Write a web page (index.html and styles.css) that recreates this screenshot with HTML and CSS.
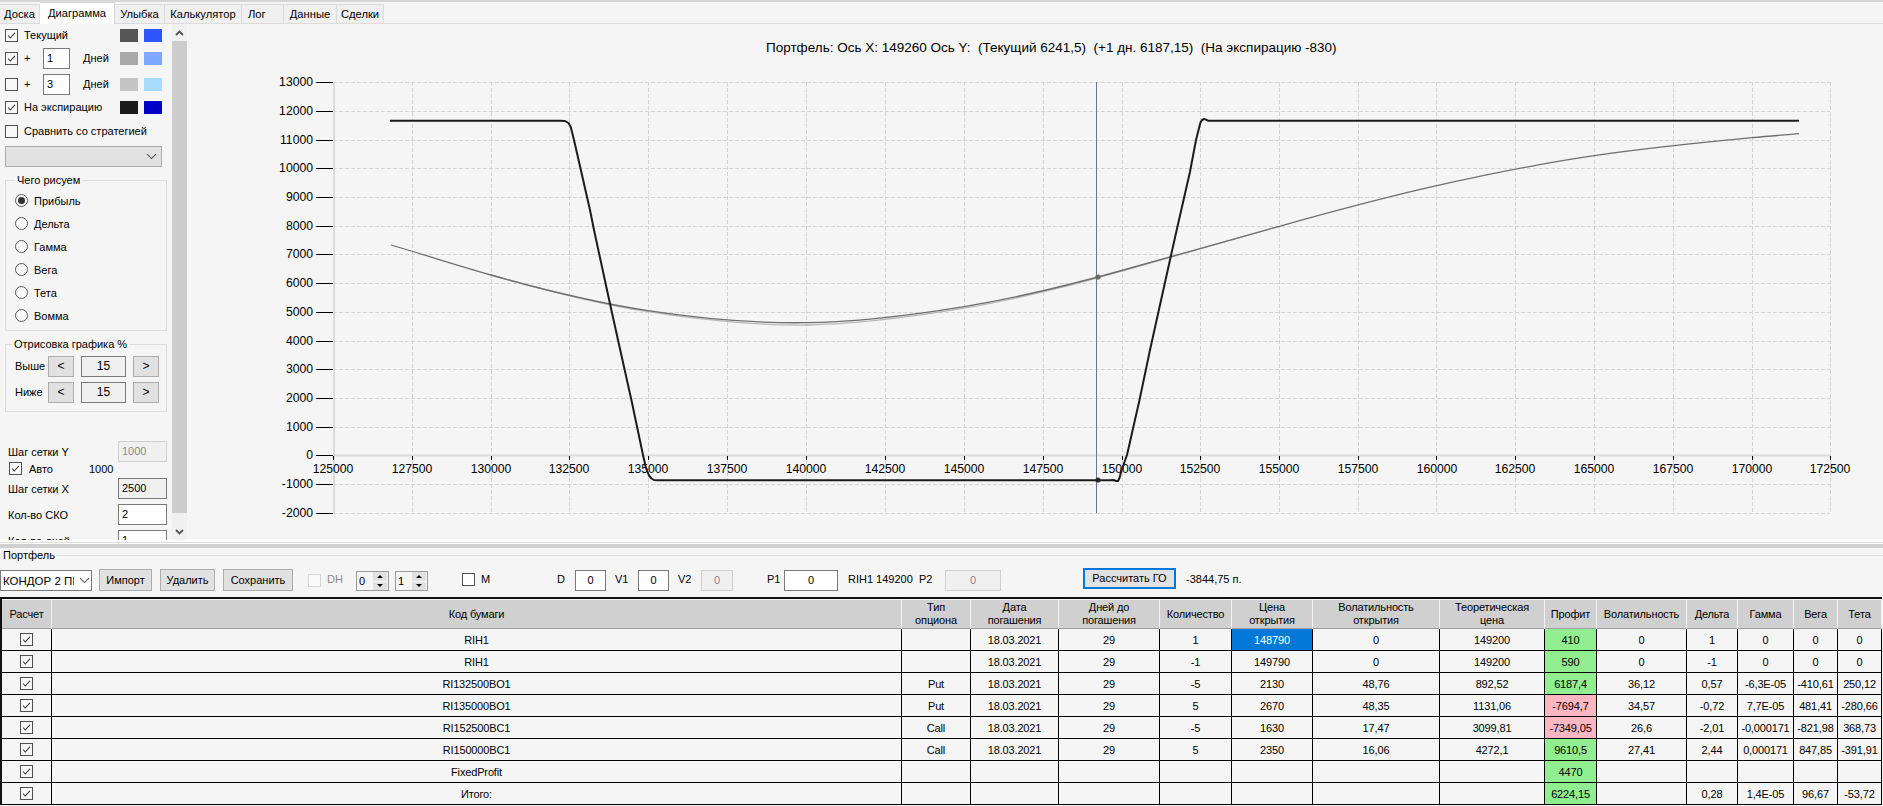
FILE: index.html
```html
<!DOCTYPE html>
<html lang="ru">
<head>
<meta charset="utf-8">
<title>Диаграмма</title>
<link rel="stylesheet" href="styles.css">
</head>
<body>
<svg class="defs" width="0" height="0">
  <symbol id="tick" viewBox="0 0 13 13"><path d="M2.5 6.5 5 9.5 10.5 3.5" fill="none" stroke="#333" stroke-width="1.2"/></symbol>
  <symbol id="down" viewBox="0 0 11 7"><path d="M1 1.2 5.5 5.6 10 1.2" fill="none" stroke="#555" stroke-width="1.1"/></symbol>
  <symbol id="sdown" viewBox="0 0 9 6"><path d="M1 1 4.5 4.5 8 1" fill="none" stroke="#555" stroke-width="1.8"/></symbol>
  <symbol id="sup" viewBox="0 0 9 6"><path d="M1 5 4.5 1.5 8 5" fill="none" stroke="#555" stroke-width="1.8"/></symbol>
</svg>

<nav class="tabs">
  <span class="tab t1">Доска</span>
  <span class="tab t2 active">Диаграмма</span>
  <span class="tab t3">Улыбка</span>
  <span class="tab t4">Калькулятор</span>
  <span class="tab t5">Лог</span>
  <span class="tab t6">Данные</span>
  <span class="tab t7">Сделки</span>
</nav>

<main class="main">
  <aside class="side">
    <div class="row r1"><span class="cb"><svg><use href="#tick"/></svg></span><span class="lb w96">Текущий</span><i class="sw c1a"></i><i class="sw c1b"></i></div>
    <div class="row r2"><span class="cb"><svg><use href="#tick"/></svg></span><span class="lb w19">+</span><span class="inp white w27">1</span><span class="lb days">Дней</span><i class="sw c2a"></i><i class="sw c2b"></i></div>
    <div class="row r3"><span class="cb"></span><span class="lb w19">+</span><span class="inp white w27">3</span><span class="lb days">Дней</span><i class="sw c3a"></i><i class="sw c3b"></i></div>
    <div class="row r4"><span class="cb"><svg><use href="#tick"/></svg></span><span class="lb w96">На экспирацию</span><i class="sw c4a"></i><i class="sw c4b"></i></div>
    <div class="row r5"><span class="cb"></span><span class="lb">Сравнить со стратегией</span></div>
    <div class="combo"><svg class="combo-ico"><use href="#down"/></svg></div>

    <fieldset class="group g1">
      <legend>Чего рисуем</legend>
      <div class="radio first"><span class="rd on"></span><span>Прибыль</span></div>
      <div class="radio"><span class="rd"></span><span>Дельта</span></div>
      <div class="radio"><span class="rd"></span><span>Гамма</span></div>
      <div class="radio"><span class="rd"></span><span>Вега</span></div>
      <div class="radio"><span class="rd"></span><span>Тета</span></div>
      <div class="radio"><span class="rd"></span><span>Вомма</span></div>
    </fieldset>

    <fieldset class="group g2">
      <legend>Отрисовка графика %</legend>
      <div class="step s1"><span class="step-l">Выше</span><span class="btn sq">&lt;</span><span class="inp num">15</span><span class="btn sq">&gt;</span></div>
      <div class="step s2"><span class="step-l">Ниже</span><span class="btn sq">&lt;</span><span class="inp num">15</span><span class="btn sq">&gt;</span></div>
    </fieldset>

    <div class="field f1"><span class="f-l">Шаг сетки Y</span><span class="inp f-i off">1000</span></div>
    <div class="auto"><span class="cb"><svg><use href="#tick"/></svg></span><span class="auto-l">Авто</span><span>1000</span></div>
    <div class="field f2"><span class="f-l">Шаг сетки X</span><span class="inp f-i">2500</span></div>
    <div class="field f3"><span class="f-l">Кол-во СКО</span><span class="inp f-i white">2</span></div>
    <div class="field f3"><span class="f-l">Кол-во дней</span><span class="inp f-i white">1</span></div>
  </aside>

  <div class="vbar">
    <div class="vbar-top"><svg class="vbar-ico"><use href="#sup"/></svg></div>
    <div class="vbar-thumb"></div>
    <div class="vbar-bot"><svg class="vbar-ico"><use href="#sdown"/></svg></div>
  </div>

  <svg class="chart" viewBox="187 24 1696 516" width="1696" height="516">
    <text class="title" x="766" y="52">Портфель: Ось Х: 149260 Ось Y:  (Текущий 6241,5)  (+1 дн. 6187,15)  (На экспирацию -830)</text>

    <path class="grid" d="M412.5 82V513M491.5 82V513M569.5 82V513M648.5 82V513M727.5 82V513M806.5 82V513M885.5 82V513M964.5 82V513M1043.5 82V513M1122.5 82V513M1200.5 82V513M1279.5 82V513M1358.5 82V513M1436.5 82V513M1515.5 82V513M1594.5 82V513M1673.5 82V513M1752.5 82V513M1830.5 82V513"/>
    <path class="grid" d="M333 82.5H1830M333 111.5H1830M333 140.5H1830M333 168.5H1830M333 197.5H1830M333 226.5H1830M333 254.5H1830M333 283.5H1830M333 312.5H1830M333 341.5H1830M333 369.5H1830M333 398.5H1830M333 427.5H1830M333 484.5H1830M333 513.5H1830"/>
    <path class="axis" d="M334 82V513M333 455.5H1830"/>
    <path class="ticks" d="M316 82.5H333M316 111.5H333M316 140.5H333M316 168.5H333M316 197.5H333M316 226.5H333M316 254.5H333M316 283.5H333M316 312.5H333M316 341.5H333M316 369.5H333M316 398.5H333M316 427.5H333M316 455.5H333M316 484.5H333M316 513.5H333"/>
    <path class="ticks" d="M333.5 456V460M412.5 456V460M491.5 456V460M569.5 456V460M648.5 456V460M727.5 456V460M806.5 456V460M885.5 456V460M964.5 456V460M1043.5 456V460M1122.5 456V460M1200.5 456V460M1279.5 456V460M1358.5 456V460M1436.5 456V460M1515.5 456V460M1594.5 456V460M1673.5 456V460M1752.5 456V460M1830.5 456V460"/>

    <g class="ylab">
      <text x="313" y="86">13000</text><text x="313" y="115">12000</text><text x="313" y="144">11000</text><text x="313" y="172">10000</text>
      <text x="313" y="201">9000</text><text x="313" y="230">8000</text><text x="313" y="258">7000</text><text x="313" y="287">6000</text>
      <text x="313" y="316">5000</text><text x="313" y="345">4000</text><text x="313" y="373">3000</text><text x="313" y="402">2000</text>
      <text x="313" y="431">1000</text><text x="313" y="459">0</text><text x="313" y="488">-1000</text><text x="313" y="517">-2000</text>
    </g>
    <g class="xlab">
      <text x="333" y="473">125000</text><text x="412" y="473">127500</text><text x="491" y="473">130000</text><text x="569" y="473">132500</text>
      <text x="648" y="473">135000</text><text x="727" y="473">137500</text><text x="806" y="473">140000</text><text x="885" y="473">142500</text>
      <text x="964" y="473">145000</text><text x="1043" y="473">147500</text><text x="1122" y="473">150000</text><text x="1200" y="473">152500</text>
      <text x="1279" y="473">155000</text><text x="1358" y="473">157500</text><text x="1437" y="473">160000</text><text x="1515" y="473">162500</text>
      <text x="1594" y="473">165000</text><text x="1673" y="473">167500</text><text x="1752" y="473">170000</text><text x="1830" y="473">172500</text>
    </g>

    <path class="cursor" d="M1096.5 82V513"/>
    <path class="c-day" d="M491 275C543.3 289.9 595.7 303.6 648 311.7C700.7 319.8 753.3 325.7 806 325C858.7 324.3 911.3 317 964 308.2C1016.6 299.5 1069.1 286.2 1121.7 271.2C1174.2 256.4 1226.8 241 1279.3 226.3"/>
    <path class="c-now" d="M391 245C424.3 254.7 457.7 265.5 491 275C543.3 289.9 595.7 302.6 648 310.7C700.7 318.8 753.3 323.4 806 322.7C858.7 322 911.3 315.3 964 306.6C1016.6 297.9 1069.1 285.3 1121.7 270.5C1174.2 255.75 1226.8 240.95 1279.3 226.3C1331.8 211.65 1384.2 197.5 1436.7 185.7C1489.2 173.9 1541.8 163.4 1594.3 155.7C1647 147.95 1699.6 142.7 1752.3 137.7C1767.9 136.2 1783.4 134.95 1799 133.7"/>
    <polyline class="c-exp" points="390,120.7 560,120.7 565,121 568.5,123 570.7,126.7 574,140 590,210 594,230 610,303.7 618,340 631.4,400 643,455 646,468 649,475.5 651.5,478.5 654,480 657.3,480.3 1110,480.3 1113.6,480 1116,481 1118,481 1119.5,478 1121.6,470 1127,455 1139.5,400 1150,350 1170.7,256.7 1176.7,230 1190,171.7 1196,140 1200.3,123 1202,120 1204,119 1206,119.6 1208,120.7 1799,120.7"/>
    <circle class="pt-a" cx="1098" cy="277" r="2.6"/>
    <circle class="pt-b" cx="1098" cy="480" r="2.6"/>
  </svg>
</main>

<div class="split"></div>

<fieldset class="portfolio">
  <legend>Портфель</legend>
  <div class="toolbar">
    <div class="sel"><span class="sel-t">КОНДОР 2 ПІ</span><svg class="sel-ico"><use href="#down"/></svg></div>
    <span class="btn b m7 w53">Импорт</span>
    <span class="btn b m8 w55">Удалить</span>
    <span class="btn b m8 w70">Сохранить</span>
    <span class="cb dis m15"></span>
    <span class="tl gray m6 w29">DH</span>
    <div class="spin"><span class="spin-v">0</span><span class="spin-b"><i class="up"></i><i class="dn"></i></span></div>
    <div class="spin m6"><span class="spin-v">1</span><span class="spin-b"><i class="up"></i><i class="dn"></i></span></div>
    <span class="cb tcb m34"></span>
    <span class="tl m6 w76">M</span>
    <span class="tl w18">D</span><span class="inp ti white w31">0</span>
    <span class="tl m9 w23">V1</span><span class="inp ti white w31">0</span>
    <span class="tl m9 w23">V2</span><span class="inp ti off w32">0</span>
    <span class="tl m34 w17">P1</span><span class="inp ti white w54">0</span>
    <span class="tl m10 w71">RIH1 149200</span>
    <span class="tl w26">P2</span><span class="inp ti off w56">0</span>
    <span class="btn go m82">Рассчитать ГО</span>
    <span class="tl m10">-3844,75 п.</span>
  </div>
</fieldset>

<table class="grid-t">
  <colgroup>
    <col class="k1"><col class="k2"><col class="k3"><col class="k4"><col class="k5"><col class="k6"><col class="k7"><col class="k8"><col class="k9"><col class="k10"><col class="k11"><col class="k12"><col class="k13"><col class="k14"><col class="k15">
  </colgroup>
  <thead>
    <tr><th>Расчет</th><th>Код бумаги</th><th>Тип<br>опциона</th><th>Дата<br>погашения</th><th>Дней до<br>погашения</th><th>Количество</th><th>Цена<br>открытия</th><th>Волатильность<br>открытия</th><th>Теоретическая<br>цена</th><th>Профит</th><th>Волатильность</th><th>Дельта</th><th>Гамма</th><th>Вега</th><th>Тета</th></tr>
  </thead>
  <tbody>
    <tr><td><span class="cb tc"><svg><use href="#tick"/></svg></span></td><td>RIH1</td><td></td><td>18.03.2021</td><td>29</td><td>1</td><td class="sel-c">148790</td><td>0</td><td>149200</td><td class="pos">410</td><td>0</td><td>1</td><td>0</td><td>0</td><td>0</td></tr>
    <tr><td><span class="cb tc"><svg><use href="#tick"/></svg></span></td><td>RIH1</td><td></td><td>18.03.2021</td><td>29</td><td>-1</td><td>149790</td><td>0</td><td>149200</td><td class="pos">590</td><td>0</td><td>-1</td><td>0</td><td>0</td><td>0</td></tr>
    <tr><td><span class="cb tc"><svg><use href="#tick"/></svg></span></td><td>RI132500BO1</td><td>Put</td><td>18.03.2021</td><td>29</td><td>-5</td><td>2130</td><td>48,76</td><td>892,52</td><td class="pos">6187,4</td><td>36,12</td><td>0,57</td><td>-6,3E-05</td><td>-410,61</td><td>250,12</td></tr>
    <tr><td><span class="cb tc"><svg><use href="#tick"/></svg></span></td><td>RI135000BO1</td><td>Put</td><td>18.03.2021</td><td>29</td><td>5</td><td>2670</td><td>48,35</td><td>1131,06</td><td class="neg">-7694,7</td><td>34,57</td><td>-0,72</td><td>7,7E-05</td><td>481,41</td><td>-280,66</td></tr>
    <tr><td><span class="cb tc"><svg><use href="#tick"/></svg></span></td><td>RI152500BC1</td><td>Call</td><td>18.03.2021</td><td>29</td><td>-5</td><td>1630</td><td>17,47</td><td>3099,81</td><td class="neg">-7349,05</td><td>26,6</td><td>-2,01</td><td>-0,000171</td><td>-821,98</td><td>368,73</td></tr>
    <tr><td><span class="cb tc"><svg><use href="#tick"/></svg></span></td><td>RI150000BC1</td><td>Call</td><td>18.03.2021</td><td>29</td><td>5</td><td>2350</td><td>16,06</td><td>4272,1</td><td class="pos">9610,5</td><td>27,41</td><td>2,44</td><td>0,000171</td><td>847,85</td><td>-391,91</td></tr>
    <tr><td><span class="cb tc"><svg><use href="#tick"/></svg></span></td><td>FixedProfit</td><td></td><td></td><td></td><td></td><td></td><td></td><td></td><td class="pos">4470</td><td></td><td></td><td></td><td></td><td></td></tr>
    <tr><td><span class="cb tc"><svg><use href="#tick"/></svg></span></td><td>Итого:</td><td></td><td></td><td></td><td></td><td></td><td></td><td></td><td class="pos">6224,15</td><td></td><td>0,28</td><td>1,4E-05</td><td>96,67</td><td>-53,72</td></tr>
  </tbody>
</table>
</body>
</html>
```

FILE: styles.css
```css
* { box-sizing: border-box; }
html, body { margin: 0; height: 806px; overflow: hidden; }
body {
  width: 1883px;
  background: #f5f5f5;
  color: #000;
  font: 11px/14px "Liberation Sans", Arial, sans-serif;
  display: flex;
  flex-direction: column;
}
.defs { position: absolute; }

/* tabs */
.tabs {
  height: 24px;
  flex: none;
  display: flex;
  align-items: flex-end;
  border-top: 2px solid #d6d6d6;
  border-bottom: 1px solid #dcdcdc;
  font-size: 11.2px;
}
.tab {
  height: 19px;
  margin-bottom: 0;
  background: #f0f0f0;
  border: 1px solid #dcdcdc;
  border-width: 1px 1px 0 0;
  text-align: center;
  line-height: 19px;
}
.tab.active { height: 22px; background: #fff; margin-bottom: -1px; line-height: 20px; border-color: #d8d8d8; position: relative; }
.t1 { width: 40px; }
.t2 { width: 75px; }
.t3 { width: 50px; }
.t4 { width: 77px; }
.t5 { width: 42px; text-align: left; padding-left: 6px; }
.t6 { width: 53px; }
.t7 { width: 47px; }

.main { height: 516px; flex: none; display: flex; }

/* sidebar */
.side { width: 172px; flex: none; height: 516px; overflow: hidden; padding-left: 5px; }
.row { height: 20px; display: flex; align-items: center; }
.r1 { margin-top: 1px; }
.r2 { margin-top: 3px; }
.r3 { margin-top: 6px; }
.r4 { margin-top: 3px; }
.r5 { margin-top: 4px; }
.cb { width: 13px; height: 13px; flex: none; border: 1px solid #4f4f4f; background: #fff; display: block; }
.cb svg { width: 11px; height: 11px; display: block; }
.row .cb { margin-right: 6px; background: #f8f8f8; }
.lb { display: block; white-space: nowrap; }
.w96 { width: 96px; }
.w19 { width: 19px; }
.days { margin-left: 13px; width: 37px; }
.sw { width: 18px; height: 13px; display: block; flex: none; }
.sw + .sw { margin-left: 6px; }
.c1a { background: #555; } .c1b { background: #2e55ff; }
.c2a { background: #a8a8a8; } .c2b { background: #7ea9ff; }
.c3a { background: #c4c4c4; } .c3b { background: #a9daff; }
.c4a { background: #1c1c1c; } .c4b { background: #0000c8; }

.inp { display: block; height: 21px; border: 1px solid #7a7a7a; background: #f0f0f0; line-height: 19px; flex: none; white-space: nowrap; }
.white { background: #fff; }
.off { background: #f0f0f0; border-color: #cfcfcf; color: #8a8a8a; }
.w27 { width: 27px; padding-left: 3px; }

.combo { width: 157px; height: 21px; margin-top: 5px; background: #e1e1e1; border: 1px solid #adadad; display: flex; justify-content: flex-end; align-items: center; padding-right: 4px; }
.combo-ico, .sel-ico { width: 11px; height: 7px; }

.group { margin: 0; padding: 0 0 0 9px; width: 162px; border: 1px solid #dcdcdc; min-width: 0; }
.group legend { padding: 0 2px; margin-left: 0; line-height: 14px; }
.g1 { margin-top: 6px; height: 158px; }
.g2 { margin-top: 6px; height: 75px; }
.g2 legend { margin-left: -3px; }
.radio { height: 23px; display: flex; align-items: center; gap: 6px; }
.radio.first { margin-top: 2px; }
.rd { width: 13px; height: 13px; border: 1px solid #5a5a5a; border-radius: 50%; background: #fafafa; display: block; position: relative; flex: none; }
.rd.on::after { content: ""; position: absolute; left: 2px; top: 2px; width: 7px; height: 7px; border-radius: 50%; background: #333; }

.step { height: 21px; display: flex; align-items: stretch; }
.s1 { margin-top: 5px; }
.s2 { margin-top: 5px; }
.step-l { width: 33px; line-height: 21px; }
.btn { display: block; background: #e1e1e1; border: 1px solid #adadad; text-align: center; flex: none; white-space: nowrap; }
.sq { width: 26px; line-height: 19px; font-size: 12px; }
.num { width: 45px; margin: 0 7px; text-align: center; font-size: 12px; }

.field { height: 21px; display: flex; align-items: center; justify-content: space-between; width: 162px; padding-left: 4px; }
.f1 { margin-top: 29px; }
.f2 { margin-top: 3px; }
.f3 { margin-top: 5px; }
.f-i { width: 49px; padding-left: 3px; }
.f-l { white-space: nowrap; margin-left: -1px; }
.auto { height: 13px; display: flex; align-items: center; padding-left: 4px; }
.auto-l { margin-left: 7px; width: 60px; }

/* scrollbar */
.vbar { width: 15px; flex: none; display: flex; flex-direction: column; background: #f0f0f0; }
.vbar-top { height: 17px; display: flex; align-items: center; justify-content: center; }
.vbar-thumb { height: 472px; background: #cdcdcd; }
.vbar-bot { flex: 1; display: flex; align-items: center; justify-content: center; padding-top: 11px; }
.vbar-ico { width: 9px; height: 6px; }

/* chart */
.chart { flex: none; display: block; font-family: "Liberation Sans", Arial, sans-serif; font-size: 12.2px; }
.title { white-space: pre; fill: #000; font-size: 13.5px; }
.grid { fill: none; stroke: #d4d4d4; stroke-width: 1; stroke-dasharray: 4 2; }
.axis { fill: none; stroke: #dcdcdc; stroke-width: 2; }
.ticks { fill: none; stroke: #000; stroke-width: 1; }
.ylab text { text-anchor: end; }
.xlab text { text-anchor: middle; }
.cursor { fill: none; stroke: #66778f; stroke-width: 1; }
.c-now, .c-day, .c-exp { fill: none; stroke-linejoin: round; stroke-linecap: butt; }
.c-now { stroke: #6f6f6f; stroke-width: 1.3; }
.c-day { stroke: #b8b8b8; stroke-width: 1.3; }
.c-exp { stroke: #1c1c1c; stroke-width: 2; }
.pt-a { fill: #6a6a6a; }
.pt-b { fill: #2a2a2a; }

/* splitter */
.split { height: 8px; flex: none; background: #d0d0d0; border-top: 2px solid #fff; box-shadow: inset 0 1px 0 #dedede, inset 0 2px 0 #fff; }

/* portfolio */
.portfolio { margin: 0; padding: 0; flex: none; height: 43px; border: 0; border-top: 1px solid #dcdcdc; min-width: 0; }
.portfolio legend { padding: 0 2px 0 3px; margin-left: 0; line-height: 14px; }
.toolbar { display: flex; align-items: flex-start; margin-top: 6px; height: 23px; white-space: nowrap; }
.sel { width: 92px; height: 21px; margin-top: 2px; background: #fff; border: 1px solid #7a7a7a; display: flex; align-items: center; padding-left: 2px; overflow: hidden; font-size: 11.5px; }
.sel-t { width: 71px; overflow: hidden; flex: none; }
.sel-ico { margin-left: 5px; flex: none; }
.b { height: 22px; margin-top: 1px; line-height: 20px; }
.go { height: 21px; width: 93px; border: 2px solid #0078d7; line-height: 17px; }
.tl { display: block; line-height: 23px; flex: none; }
.gray { color: #8a8a8a; }
.dis { margin-top: 6px; border-color: #d5d5d5; background: #fafafa; }
.tcb { margin-top: 5px; }
.ti { margin-top: 2px; text-align: center; }
.spin { width: 33px; height: 20px; margin-top: 3px; border: 1px solid #9a9a9a; display: flex; flex: none; }
.spin-v { width: 16px; padding-left: 2px; line-height: 18px; }
.spin-b { width: 14px; display: flex; flex-direction: column; gap: 1px; }
.spin-b i { flex: 1; background: #e1e1e1; display: flex; align-items: center; justify-content: center; }
.spin-b i::before { content: ""; border-left: 3px solid transparent; border-right: 3px solid transparent; }
.spin-b .up::before { border-bottom: 3px solid #000; }
.spin-b .dn::before { border-top: 3px solid #000; }
.m6 { margin-left: 6px; }
.m7 { margin-left: 7px; }
.m8 { margin-left: 8px; }
.m9 { margin-left: 9px; }
.m10 { margin-left: 10px; }
.m15 { margin-left: 15px; }
.m34 { margin-left: 34px; }
.m82 { margin-left: 82px; }
.w17 { width: 17px; } .w18 { width: 18px; } .w23 { width: 23px; } .w26 { width: 26px; } .w29 { width: 29px; }
.w31 { width: 31px; } .w32 { width: 32px; } .w53 { width: 53px; } .w54 { width: 54px; } .w55 { width: 55px; }
.w56 { width: 56px; } .w70 { width: 70px; } .w71 { width: 71px; } .w76 { width: 76px; }

/* table */
.grid-t { margin-top: 6px; width: 1882px; table-layout: fixed; border-collapse: separate; border-spacing: 0; border-top: 2px solid #111; border-left: 2px solid #111; flex: none; letter-spacing: -0.15px; }
.k1 { width: 50px; } .k2 { width: 850px; } .k3 { width: 69px; } .k4 { width: 88px; } .k5 { width: 101px; }
.k6 { width: 72px; } .k7 { width: 81px; } .k8 { width: 127px; } .k9 { width: 105px; } .k10 { width: 52px; }
.k11 { width: 90px; } .k12 { width: 51px; } .k13 { width: 56px; } .k14 { width: 44px; } .k15 { width: 44px; }
th { height: 30px; padding: 0; font-weight: normal; background: #d0d0d0; border-top: 1px solid #f5f5f5; border-right: 1px solid #f2f2f2; border-bottom: 1px solid #a0a0a0; line-height: 13px; text-align: center; overflow: hidden; white-space: nowrap; }
td { height: 22px; padding: 0; border-right: 1px solid #000; border-bottom: 1px solid #000; text-align: center; line-height: 14px; overflow: hidden; white-space: nowrap; }
.tc { margin: 0 auto; background: #f8f8f8; }
.sel-c { background: #0078d7; color: #fff; }
.pos { background: #90ee90; }
.neg { background: #ffb6c1; }
```
